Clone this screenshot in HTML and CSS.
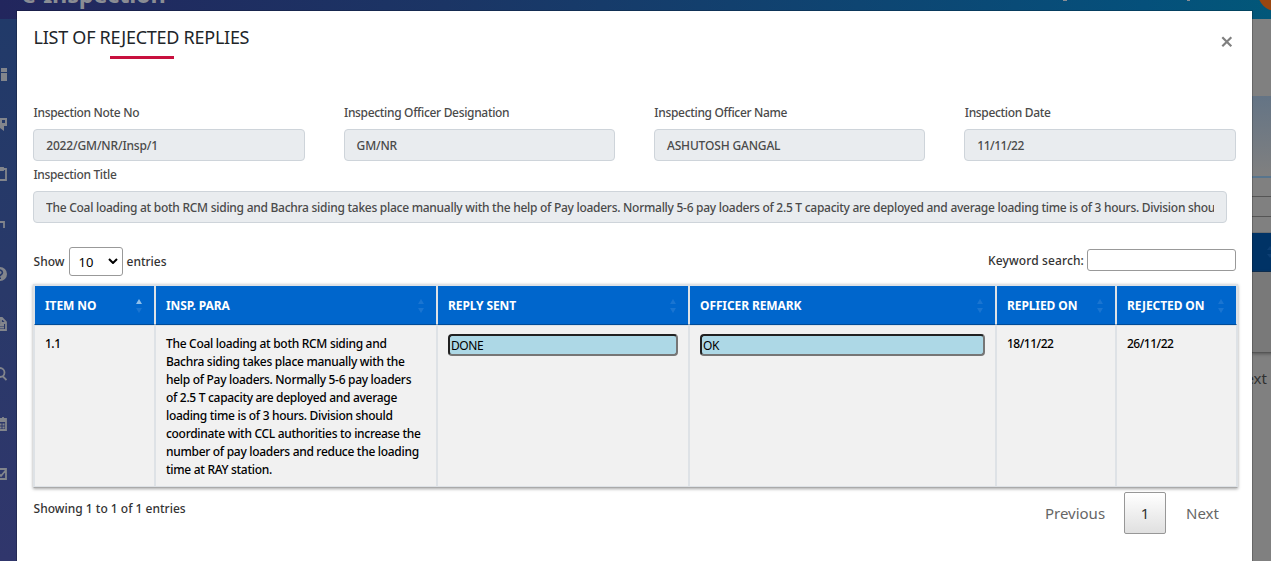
FILE: index.html
```html
<!DOCTYPE html>
<html lang="en">
<head>
<meta charset="utf-8">
<title>e-Inspection</title>
<link rel="stylesheet" href="styles.css">
</head>
<body>
<div class="app">
  <header class="topbar"><span class="brand">e-Inspection</span><svg class="user" viewBox="0 0 128 3"><path d="M0 0h4v1H0zM124 0h3v1h-3z"/></svg><span class="avatar"></span></header>
  <div class="main">
    <nav class="sidebar">
      <svg viewBox="0 0 14 14"><path d="M0 1h7v6H0zM8 1h6v4H8zM0 9h7v5H0zM8 6h6v8H8z"/></svg>
      <svg viewBox="0 0 14 14"><path d="M0 1h14v8h-3v5L7 11H0zM9 3v3h3V3z" fill-rule="evenodd"/></svg>
      <svg viewBox="0 0 14 14"><path class="line" d="M1 2h12v11H1zM4 1h6v2H4z"/></svg>
      <svg viewBox="0 0 14 14"><path class="line" d="M1 5h10v6"/></svg>
      <svg viewBox="0 0 14 14"><circle cx="7" cy="7" r="7"/><path class="cut" d="M4.800 5.500a2.300 2.300 0 1 1 3.700 1.800C7.200 8 7.200 8.300 7.200 9.200M7.200 10.500v1.500"/></svg>
      <svg viewBox="0 0 14 14"><path class="line" d="M2 1h7l4 4v8H2zM8 1v5h5M4 8h7M4 10.500h7"/></svg>
      <svg viewBox="0 0 14 14"><path class="line" d="M7 1a4.500 4.500 0 1 1 0 9a4.500 4.500 0 0 1 0-9zM10 9.500l3.500 3.500"/></svg>
      <svg viewBox="0 0 14 14"><path class="line" d="M1 2h12v11H1zM1 4h12M3 0v3M10 0v3"/><path d="M3 6.500h2v2H3zM6.500 6.500h2v2h-2zM9.500 6.500h2v2h-2zM6.500 9.500h2v2h-2zM9.500 9.500h2v2h-2z"/></svg>
      <svg viewBox="0 0 14 14"><path class="line" d="M1 2h12v10H1zM4 5l4 4 5-6"/></svg>
    </nav>
    <div class="content">
      <div class="panel"></div><div class="row first"></div><div class="row"></div><div class="strip"></div>
      <div class="bluehead"><svg viewBox="0 0 8 14"><path d="M1 5l3-4 3 4zM1 9l3 4 3-4z"/></svg></div>
      <div class="body-row"></div>
      <div class="next">Next</div>
    </div>
  </div>
</div>
<section class="modal">
  <header class="modal-head">
    <h1>LIST OF REJECTED REPLIES</h1>
    <button class="close" aria-label="Close"><svg viewBox="0 0 12 12"><path d="M1.300 1.300l9 9M10.300 1.300l-9 9"/></svg></button>
  </header>
  <div class="fields">
    <div class="field"><label>Inspection Note No</label><div class="value">2022/GM/NR/Insp/1</div></div>
    <div class="field"><label>Inspecting Officer Designation</label><div class="value">GM/NR</div></div>
    <div class="field"><label>Inspecting Officer Name</label><div class="value">ASHUTOSH GANGAL</div></div>
    <div class="field"><label>Inspection Date</label><div class="value date">11/11/22</div></div>
  </div>
  <div class="field title-field"><label>Inspection Title</label><div class="value"><div class="clip">The Coal loading at both RCM siding and Bachra siding takes place manually with the help of Pay loaders. Normally 5-6 pay loaders of 2.5 T capacity are deployed and average loading time is of 3 hours. Division shou</div></div></div>
  <div class="tools">
    <div class="length">Show <span class="select">10<svg viewBox="0 0 10 6"><path d="M1 1l4 4 4-4"/></svg></span> entries</div>
    <div class="search"><label>Keyword search:</label><input type="text"></div>
  </div>
  <table>
    <colgroup><col class="c1"><col class="c2"><col class="c3"><col class="c4"><col class="c5"><col class="c6"></colgroup>
    <thead><tr>
      <th><div class="th asc"><span>ITEM NO</span><svg viewBox="0 0 6 14"><path d="M0 5l3-5 3 5z"/><path d="M0 9h6l-3 5z"/></svg></div></th>
      <th><div class="th"><span>INSP. PARA</span><svg viewBox="0 0 6 14"><path d="M0 5l3-5 3 5z"/><path d="M0 9h6l-3 5z"/></svg></div></th>
      <th><div class="th"><span>REPLY SENT</span><svg viewBox="0 0 6 14"><path d="M0 5l3-5 3 5z"/><path d="M0 9h6l-3 5z"/></svg></div></th>
      <th><div class="th"><span>OFFICER REMARK</span><svg viewBox="0 0 6 14"><path d="M0 5l3-5 3 5z"/><path d="M0 9h6l-3 5z"/></svg></div></th>
      <th><div class="th"><span>REPLIED ON</span><svg viewBox="0 0 6 14"><path d="M0 5l3-5 3 5z"/><path d="M0 9h6l-3 5z"/></svg></div></th>
      <th><div class="th"><span>REJECTED ON</span><svg viewBox="0 0 6 14"><path d="M0 5l3-5 3 5z"/><path d="M0 9h6l-3 5z"/></svg></div></th>
    </tr></thead>
    <tbody><tr>
      <td class="date">1.1</td>
      <td class="para">The Coal loading at both RCM siding and<br>Bachra siding takes place manually with the<br>help of Pay loaders. Normally 5-6 pay loaders<br>of 2.5 T capacity are deployed and average<br>loading time is of 3 hours. Division should<br>coordinate with CCL authorities to increase the<br>number of pay loaders and reduce the loading<br>time at RAY station.</td>
      <td class="box"><div class="reply">DONE</div></td>
      <td class="box"><div class="reply">OK</div></td>
      <td class="date">18/11/22</td>
      <td class="date">26/11/22</td>
    </tr></tbody>
  </table>
  <footer class="foot">
    <div class="info">Showing 1 to 1 of 1 entries</div>
    <div class="pager"><span class="page prev">Previous</span><span class="page current">1</span><span class="page">Next</span></div>
  </footer>
</section>
</body>
</html>
```

FILE: styles.css
```css
* { box-sizing: border-box; }
html, body { margin: 0; height: 561px; overflow: hidden; }
body { position: relative; background: #808080; font-family: "Noto Sans", sans-serif; font-size: 12px; font-weight: 500; color: #212529; }
svg { display: block; flex: none; }

.app { height: 561px; display: flex; flex-direction: column; overflow: hidden; }
.topbar { height: 19px; flex: none; display: flex; align-items: flex-start; overflow: hidden; background: linear-gradient(90deg, #22265d, #1b3565 35%, #05507b 90%, #025779); color: #8a8d94; }
.brand { margin: -21px 0 0 22px; width: 1041px; flex: none; font-size: 23.500px; line-height: 30px; font-weight: 700; letter-spacing: -.2px; }
.user { width: 128px; height: 3px; fill: #8a8d94; }
.avatar { width: 36px; height: 36px; margin: -25px 0 0 67px; border-radius: 50%; background: #994611; flex: none; }
.main { flex: 1; display: flex; min-height: 0; }
.sidebar { width: 17px; flex: none; padding-top: 48px; display: flex; flex-direction: column; gap: 36px; overflow: hidden; background: linear-gradient(#213a69, #293969 50%, #30366c); }
.sidebar svg { width: 14px; height: 14px; margin-left: -7px; fill: #82858c; }
.sidebar .line { fill: none; stroke: #82858c; stroke-width: 1.800; }
.sidebar .cut { fill: none; stroke: #27396a; stroke-width: 1.600; }
.content { flex: 1; padding: 77px 0 0 1235px; }
.panel { height: 82px; background: linear-gradient(#647485, #808080); border-bottom: 2px solid #58758d; }
.row { height: 20px; border-bottom: 1px solid #555; }
.row.first { height: 19px; }
.strip { height: 16px; border-bottom: 1px solid #6e7072; }
.bluehead { height: 39px; background: #003366; border-bottom: 1px solid #00264d; display: flex; align-items: center; padding-left: 14px; }
.bluehead svg { width: 8px; height: 14px; fill: #0d3f73; }
.body-row { height: 81px; background: #797979; border-bottom: 1px solid #555; box-shadow: 0 1px 3px #555; }
.next { margin: 13px 0 0 -18px; font-size: 15px; line-height: 24px; font-weight: 400; color: #303030; }

.modal { position: absolute; left: 17px; top: 11px; width: 1235px; height: 560px; background: #fff; box-shadow: 0 0 0 1px rgba(0,0,0,.2); padding: 0 15px 0 16px; }
.modal-head { height: 93px; display: flex; justify-content: space-between; padding: 12px 4px 0 .6px; }
h1 { margin: 0; width: 219px; height: 36px; font-size: 18px; line-height: 28px; font-weight: 400; letter-spacing: -.27px; white-space: nowrap; background: linear-gradient(#c8103e, #c8103e) 76.400px 33px / 64px 3px no-repeat; }
.close { width: 12px; height: 12px; border: 0; padding: 0; margin-top: 13px; background: none; }
.close path { fill: none; stroke: #7f7f7f; stroke-width: 2.200; }
.fields { display: grid; grid-template-columns: repeat(4, 271.500px); column-gap: 38.900px; height: 62px; padding-left: .2px; }
.field label { display: block; height: 25px; padding-left: .4px; line-height: 18px; letter-spacing: -.33px; color: #4a4a4a; white-space: nowrap; }
.value { height: 32px; border: 1px solid #ced4da; border-radius: 4px; background: #e9ecef; padding: 0 12px; line-height: 31px; letter-spacing: -.16px; color: #4a4a4a; white-space: nowrap; }
.title-field { width: 1194px; height: 81px; }
.clip { overflow: hidden; letter-spacing: -.272px; }
.tools { height: 37px; display: flex; justify-content: space-between; }
.length { height: 29px; display: flex; align-items: center; gap: 4px; padding-left: .6px; color: #333; }
.select { width: 54px; height: 29px; border: 1px solid #999; border-radius: 3px; padding: 0 4px 0 9px; display: flex; align-items: center; justify-content: space-between; font-size: 13px; font-weight: 400; color: #000; }
.select svg { width: 10px; height: 6px; fill: none; stroke: #000; stroke-width: 2; margin-bottom: 2px; }
.search { height: 26px; display: flex; align-items: center; gap: 3px; padding-top: 2px; margin-right: 1px; color: #333; letter-spacing: .13px; }
.search label { padding-bottom: 2px; }
.search input { width: 149px; height: 22px; margin: -2px 0 0; padding: 0 3px; border: 1px solid #999; border-radius: 3px; background: #fff; }

table { width: 1205px; table-layout: fixed; border-collapse: separate; border-spacing: 0; border: 1px solid #dee2e6; border-bottom-color: #aaa; box-shadow: 0 1px 3px rgba(0,0,0,.35); color: #000; }
.c1 { width: 121px; } .c2 { width: 282px; } .c3 { width: 252px; } .c4 { width: 307px; } .c5 { width: 120px; } .c6 { width: 121px; }
th, td { border: 1px solid #dee2e6; text-align: left; vertical-align: top; }
th { height: 40px; padding: 0; background: #0066cc; border-bottom-color: #004c99; color: #fff; font-weight: 700; letter-spacing: -.1px; }
.th { height: 38px; display: flex; justify-content: space-between; align-items: center; padding: 0 12px 0 10px; white-space: nowrap; }
.th svg { width: 6px; height: 14px; fill: #1a75d1; margin-top: 2px; }
.asc svg path:first-child { fill: #8fbfea; }
td { height: 162px; padding: 9px 10px 0; background: #f1f1f1; line-height: 18px; white-space: nowrap; }
td.box { padding-top: 8px; }
.para { letter-spacing: -.3px; }
.date { letter-spacing: -.5px; }
.reply { height: 22px; border: 2px solid; border-color: #212121 #767676 #767676 #212121; border-radius: 4px; background: #add8e6; padding-left: 1px; line-height: 19px; font-weight: 400; letter-spacing: -.4px; }
.foot { display: flex; justify-content: space-between; padding: 4px 0 0 .6px; color: #333; }
.info { padding-top: 8px; line-height: 18px; }
.pager { display: flex; margin-right: -2px; font-size: 15px; font-weight: 400; color: #666; line-height: 42px; }
.page { width: 73px; text-align: center; white-space: nowrap; }
.prev { width: 98px; }
.current { width: 42px; height: 42px; line-height: 40px; border: 1px solid #979797; border-radius: 2px; background: linear-gradient(#fff, #e0e0e0); color: #333; }
```
